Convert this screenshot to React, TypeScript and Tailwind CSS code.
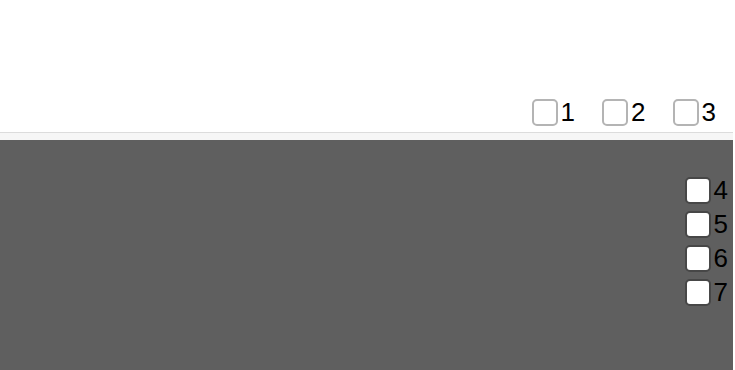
const top = ["1", "2", "3"];
const side = ["4", "5", "6", "7"];

function Box({ dark }: { dark?: boolean }) {
  return (
    <span
      className={
        "block w-[26px] h-[27px] rounded-[5px] bg-white border-2 " +
        (dark ? "border-[#474747]" : "border-[#b4b4b4]")
      }
    />
  );
}

export default function App() {
  return (
    <div className="w-[735px] h-[370px] bg-white overflow-hidden font-['Liberation_Sans',Arial,sans-serif] text-[26px] text-black">
      <div className="w-[733px]">
        {/* Top toolbar */}
        <div className="h-[132px] flex items-end justify-end pr-[17px] pb-[6px] gap-[27px]">
          {top.map((n) => (
            <label key={n} className="flex items-center gap-[3px] leading-[28px]">
              <Box />
              <span>{n}</span>
            </label>
          ))}
        </div>
        <div className="h-px bg-[#dcdcdc]" />
        <div className="h-[7px] bg-[#f6f6f6]" />

        {/* Dark panel */}
        <div className="h-[230px] bg-[#5f5f5f] flex flex-col items-end pt-[37px] pr-[5px] gap-[7px]">
          {side.map((n) => (
            <label key={n} className="flex items-center gap-[3px] leading-[27px]">
              <Box dark />
              <span>{n}</span>
            </label>
          ))}
        </div>
      </div>
    </div>
  );
}
